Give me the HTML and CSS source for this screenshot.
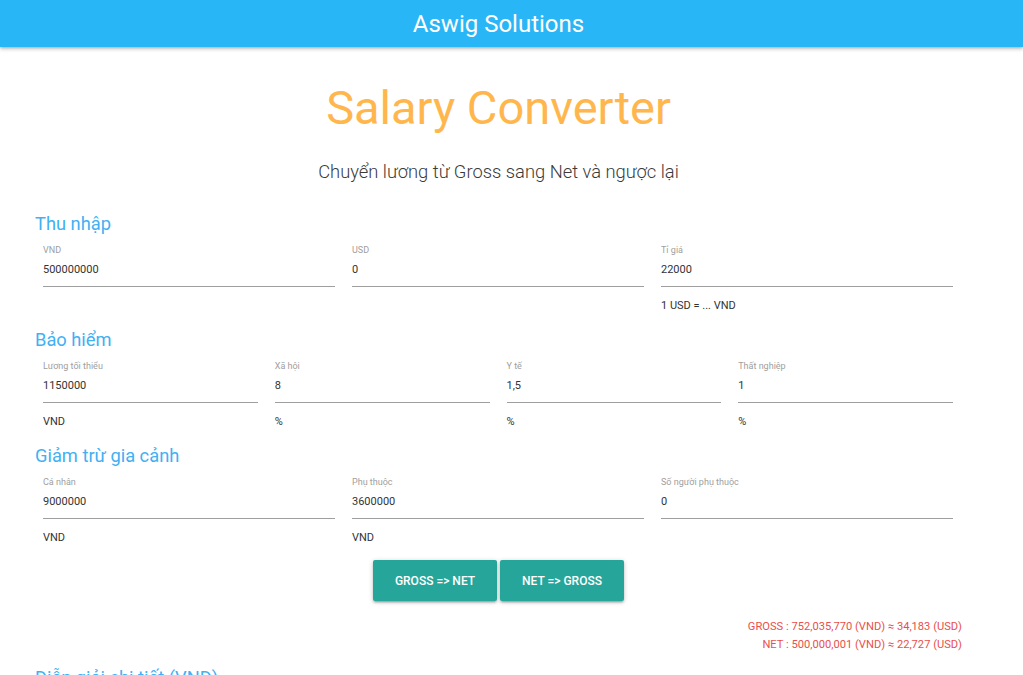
FILE: index.html
```html
<!DOCTYPE html>
<html lang="vi">
<head>
<meta charset="utf-8">
<title>Salary Converter</title>
<link rel="stylesheet" href="styles.css">
</head>
<body>
<header class="navbar">
  <div class="container nav-inner"><span class="brand">Aswig Solutions</span></div>
</header>
<main class="container">
  <h1 class="title">Salary Converter</h1>
  <p class="subtitle">Chuyển lương từ Gross sang Net và ngược lại</p>

  <section class="group">
    <h2 class="group-title">Thu nhập</h2>
    <div class="fields cols-3">
      <div class="field"><label class="field-label">VND</label><input class="field-input" value="500000000"><div class="field-helper"></div></div>
      <div class="field"><label class="field-label">USD</label><input class="field-input" value="0"><div class="field-helper"></div></div>
      <div class="field"><label class="field-label">Tỉ giá</label><input class="field-input" value="22000"><div class="field-helper">1 USD = ... VND</div></div>
    </div>
  </section>

  <section class="group">
    <h2 class="group-title">Bảo hiểm</h2>
    <div class="fields cols-4">
      <div class="field"><label class="field-label">Lương tối thiểu</label><input class="field-input" value="1150000"><div class="field-helper">VND</div></div>
      <div class="field"><label class="field-label">Xã hội</label><input class="field-input" value="8"><div class="field-helper">%</div></div>
      <div class="field"><label class="field-label">Y tế</label><input class="field-input" value="1,5"><div class="field-helper">%</div></div>
      <div class="field"><label class="field-label">Thất nghiệp</label><input class="field-input" value="1"><div class="field-helper">%</div></div>
    </div>
  </section>

  <section class="group">
    <h2 class="group-title">Giảm trừ gia cảnh</h2>
    <div class="fields cols-3">
      <div class="field"><label class="field-label">Cá nhân</label><input class="field-input" value="9000000"><div class="field-helper">VND</div></div>
      <div class="field"><label class="field-label">Phụ thuộc</label><input class="field-input" value="3600000"><div class="field-helper">VND</div></div>
      <div class="field"><label class="field-label">Số người phụ thuộc</label><input class="field-input" value="0"><div class="field-helper"></div></div>
    </div>
  </section>

  <div class="actions">
    <button class="btn">GROSS =&gt; NET</button>
    <button class="btn">NET =&gt; GROSS</button>
  </div>

  <div class="results">
    <div>GROSS : 752,035,770 (VND) ≈ 34,183 (USD)</div>
    <div>NET : 500,000,001 (VND) ≈ 22,727 (USD)</div>
  </div>

  <h2 class="group-title detail-title">Diễn giải chi tiết (VND)</h2>
</main>
</body>
</html>
```

FILE: styles.css
```css
* { box-sizing: border-box; }

html, body {
  margin: 0;
  padding: 0;
  background: #fff;
  font-family: Roboto, "Noto Sans", "Liberation Sans", sans-serif;
  color: #333;
  overflow: hidden;
}

.container {
  width: 927px;
  margin-left: 35px;
}

.navbar {
  height: 47px;
  background: #29b6f6;
  box-shadow: 0 2px 4px rgba(0, 0, 0, 0.22), 0 1px 2px rgba(0, 0, 0, 0.12);
  position: relative;
  z-index: 2;
}

.nav-inner {
  text-align: center;
}

.brand {
  color: #fff;
  font-size: 24px;
  line-height: 49px;
}

.title {
  margin: 33px 0 0;
  font-size: 47px;
  line-height: 56px;
  font-weight: 400;
  color: #ffb74d;
  text-align: center;
}

.subtitle {
  margin: 24px 0 0;
  font-size: 18.35px;
  line-height: 24px;
  font-weight: 300;
  color: #3a3a3a;
  text-align: center;
}

.group {
  margin-bottom: 15px;
}

.group:first-of-type {
  margin-top: 28px;
}

.group-title {
  margin: 0 0 8px;
  font-size: 18.3px;
  line-height: 24px;
  font-weight: 400;
  color: #42b0f3;
}

.fields {
  display: grid;
}

.cols-3 { grid-template-columns: repeat(3, 1fr); }
.cols-4 { grid-template-columns: repeat(4, 1fr); }

.field {
  padding: 0 9px 0 8px;
  display: flex;
  flex-direction: column;
}

.field-label {
  font-size: 9px;
  line-height: 12px;
  color: #9e9e9e;
}

.field-input {
  display: block;
  width: 100%;
  height: 31px;
  margin: 0;
  padding: 6px 0 9px;
  border: none;
  border-bottom: 1px solid #9e9e9e;
  border-radius: 0;
  outline: none;
  background: transparent;
  font-family: inherit;
  font-size: 11px;
  line-height: 15px;
  color: #333;
}

.field-helper {
  margin-top: 12px;
  min-height: 14px;
  font-size: 11px;
  line-height: 14px;
  color: #333;
}

.actions {
  margin-top: 15px;
  display: flex;
  justify-content: center;
  gap: 3px;
}

.btn {
  width: 124px;
  height: 41px;
  padding: 0;
  border: none;
  border-radius: 2px;
  background: #26a69a;
  color: #fff;
  font-family: inherit;
  font-size: 12px;
  font-weight: 500;
  box-shadow: 0 2px 2px 0 rgba(0, 0, 0, 0.14), 0 3px 1px -2px rgba(0, 0, 0, 0.12), 0 1px 5px 0 rgba(0, 0, 0, 0.2);
  cursor: pointer;
}

.results {
  margin-top: 17px;
  text-align: right;
  font-size: 11.15px;
  line-height: 18px;
  color: #e8504c;
}

.detail-title {
  margin-top: 12px;
}
```
